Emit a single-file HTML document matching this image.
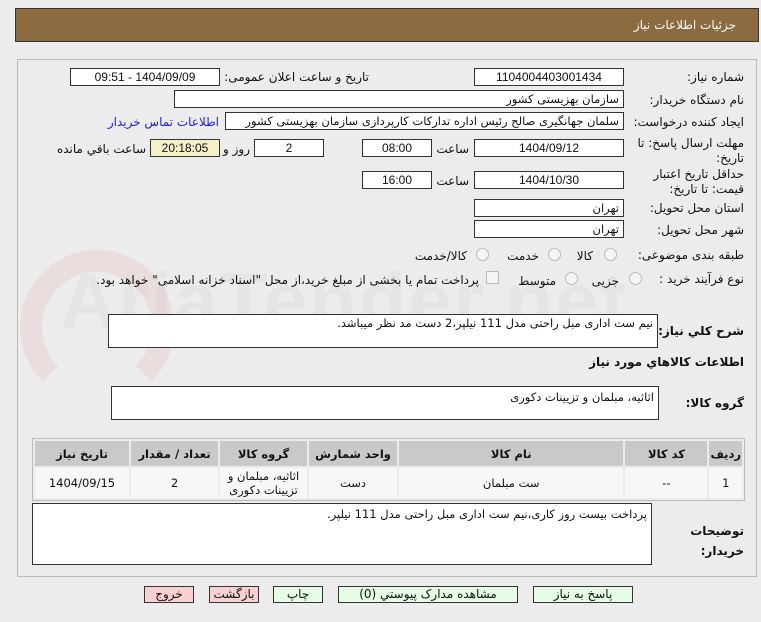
<!DOCTYPE html>
<html><head><meta charset="utf-8">
<style>
body{margin:0;width:761px;height:622px;background:#ececec;font-family:"DejaVu Sans","Liberation Sans",sans-serif;font-size:12px;color:#111;position:relative;overflow:hidden}
.a{position:absolute}
.hdr{left:15px;top:8px;width:744px;height:34px;background:#8c6b40;border:1px solid #333;box-sizing:border-box}
.hdr span{position:absolute;right:22px;top:9px;color:#fff;font-size:12px}
.panel{left:17px;top:59px;width:740px;height:518px;border:1px solid #bbb;box-sizing:border-box;background:#ececec}
.in{position:absolute;background:#fff;border:1px solid #333;box-sizing:border-box;height:18px;line-height:16px;text-align:center;font-size:12px;direction:rtl;font-family:"Liberation Sans Narrow","Liberation Sans",sans-serif}
.ir{text-align:right;padding-right:4px;font-family:"DejaVu Sans",sans-serif;font-size:11.5px}
.l{position:absolute;direction:rtl;text-align:right;white-space:nowrap;font-size:12px}
.rad{position:absolute;width:11px;height:11px;border:1px solid #bbb;border-radius:50%;background:#f4f4f4}
.bold{font-weight:bold}
table{border-collapse:separate;border-spacing:2px;background:#ececec;border:1px solid #bbb;direction:rtl}
th{background:#c9c9c9;font-weight:bold;height:23px;font-size:11.5px}
td{background:#f7f7f7;height:28px;text-align:center;font-size:11.5px}
.btn{position:absolute;top:586px;height:17px;border:1px solid #333;box-sizing:border-box;text-align:center;line-height:15px;font-size:12px}
</style></head><body>
<div class="a hdr"><span>جزئیات اطلاعات نیاز</span></div>
<div class="a panel"></div>
<div class="a" style="left:60px;top:255px;font-size:78px;font-weight:bold;color:rgba(150,150,150,0.08);font-family:'Liberation Sans',sans-serif;letter-spacing:2px">AriaTender.net</div>
<div class="a" style="left:20px;top:250px;width:110px;height:110px;border:22px solid rgba(210,80,80,0.09);border-radius:50%;border-bottom-color:transparent"></div>

<div class="l" style="right:17px;top:70px">شماره نیاز:</div>
<div class="in" style="left:474px;top:68px;width:150px">1104004403001434</div>
<div class="l" style="right:392px;top:70px">تاریخ و ساعت اعلان عمومی:</div>
<div class="in" style="left:70px;top:68px;width:150px">1404/09/09 - 09:51</div>

<div class="l" style="right:17px;top:93px">نام دستگاه خریدار:</div>
<div class="in ir" style="left:174px;top:90px;width:450px">سازمان بهزیستی کشور</div>

<div class="l" style="right:17px;top:115px">ایجاد کننده درخواست:</div>
<div class="in ir" style="left:225px;top:112px;width:399px">سلمان جهانگیری صالح رئیس اداره تدارکات کارپردازی سازمان بهزیستی کشور</div>
<div class="l" style="right:542px;top:115px;color:#2222dd">اطلاعات تماس خریدار</div>

<div class="l" style="right:17px;top:136px;line-height:15px">مهلت ارسال پاسخ: تا<br>تاریخ:</div>
<div class="in" style="left:474px;top:139px;width:150px">1404/09/12</div>
<div class="l" style="right:292px;top:142px">ساعت</div>
<div class="in" style="left:362px;top:139px;width:70px">08:00</div>
<div class="in" style="left:254px;top:139px;width:70px">2</div>
<div class="l" style="right:511px;top:142px">روز و</div>
<div class="in" style="left:150px;top:139px;width:70px;background:#f4f0c8">20:18:05</div>
<div class="l" style="right:615px;top:142px">ساعت باقي مانده</div>

<div class="l" style="right:17px;top:167px;line-height:15px">حداقل تاریخ اعتبار<br>قیمت: تا تاریخ:</div>
<div class="in" style="left:474px;top:171px;width:150px">1404/10/30</div>
<div class="l" style="right:292px;top:174px">ساعت</div>
<div class="in" style="left:362px;top:171px;width:70px">16:00</div>

<div class="l" style="right:17px;top:201px">استان محل تحویل:</div>
<div class="in ir" style="left:474px;top:199px;width:150px">تهران</div>
<div class="l" style="right:17px;top:223px">شهر محل تحویل:</div>
<div class="in ir" style="left:474px;top:220px;width:150px">تهران</div>

<div class="l" style="right:17px;top:248px">طبقه بندی موضوعی:</div>
<div class="rad" style="left:604px;top:248px"></div><div class="l" style="right:168px;top:249px">کالا</div>
<div class="rad" style="left:548px;top:248px"></div><div class="l" style="right:222px;top:249px">خدمت</div>
<div class="rad" style="left:476px;top:248px"></div><div class="l" style="right:294px;top:249px">کالا/خدمت</div>

<div class="l" style="right:17px;top:272px">نوع فرآیند خرید :</div>
<div class="rad" style="left:629px;top:272px"></div><div class="l" style="right:142px;top:274px">جزیی</div>
<div class="rad" style="left:565px;top:272px"></div><div class="l" style="right:205px;top:274px">متوسط</div>
<div class="a" style="left:486px;top:271px;width:11px;height:11px;border:1px solid #bbb;background:#f4f4f4"></div>
<div class="l" style="right:282px;top:273px">پرداخت تمام یا بخشی از مبلغ خرید،از محل "اسناد خزانه اسلامی" خواهد بود.</div>

<div class="l bold" style="right:17px;top:324px">شرح کلي نياز:</div>
<div class="in ir" style="left:108px;top:314px;width:550px;height:34px;text-align:right">نیم ست اداری مبل راحتی مدل 111 نیلپر،2 دست مد نظر میباشد.</div>
<div class="l bold" style="right:17px;top:355px">اطلاعات کالاهاي مورد نياز</div>

<div class="l bold" style="right:17px;top:396px">گروه کالا:</div>
<div class="in ir" style="left:111px;top:386px;width:548px;height:34px;text-align:right;padding-top:2px">اثاثیه، مبلمان و تزیینات دکوری</div>

<table class="a" style="left:32px;top:438px;width:713px">
<tr><th style="width:26px">ردیف</th><th style="width:80px">کد کالا</th><th>نام کالا</th><th style="width:86px">واحد شمارش</th><th style="width:85px">گروه کالا</th><th style="width:85px">تعداد / مقدار</th><th style="width:92px">تاریخ نیاز</th></tr>
<tr><td>1</td><td>--</td><td>ست مبلمان</td><td>دست</td><td style="line-height:14px">اثاثیه، مبلمان و<br>تزیینات دکوری</td><td>2</td><td>1404/09/15</td></tr>
</table>

<div class="l bold" style="right:17px;top:521px;line-height:20px">توضیحات<br>خریدار:</div>
<div class="in ir" style="left:32px;top:503px;width:620px;height:62px;text-align:right;padding-top:2px">پرداخت بیست روز کاری،نیم ست اداری مبل راحتی مدل 111 نیلپر.</div>

<div class="btn" style="left:144px;width:50px;background:#f8d0d0">خروج</div>
<div class="btn" style="left:209px;width:50px;background:#f8d0d0">بازگشت</div>
<div class="btn" style="left:273px;width:50px;background:#e4fde4">چاپ</div>
<div class="btn" style="left:338px;width:180px;background:#e4fde4">مشاهده مدارک پیوستي (0)</div>
<div class="btn" style="left:533px;width:100px;background:#e4fde4">پاسخ به نیاز</div>
</body></html>
